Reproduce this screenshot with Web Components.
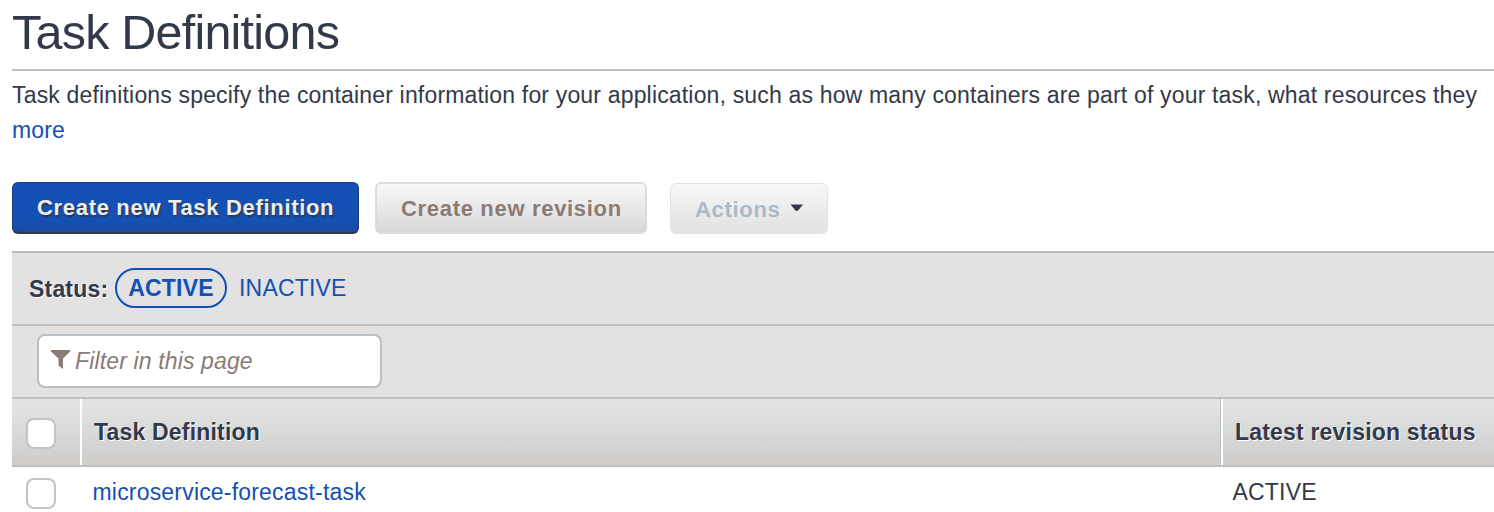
<!DOCTYPE html>
<html lang="en"><head><meta charset="utf-8"><title>Task Definitions</title>
<style>
html,body{margin:0;background:#fff;overflow:hidden}
body{width:1494px;height:512px;font-family:"Liberation Sans",Arial,sans-serif;font-size:23px;letter-spacing:.19px;color:#32394a}
</style></head><body>
<task-page></task-page>
<script>
const define=(name,css,html)=>{
  const t=document.createElement('template');
  t.innerHTML=`<style>*{box-sizing:border-box}:host{box-sizing:border-box}${css}</style>${html}`;
  customElements.define(name,class extends HTMLElement{
    constructor(){super();this.attachShadow({mode:'open'}).append(t.content.cloneNode(true));}
  });
};
define('page-intro',`:host{display:block;height:182px;padding-left:12px}
h1{margin:0;height:71px;border-bottom:2px solid #c0c1c3;font-size:48.5px;font-weight:400;line-height:64px;letter-spacing:-.78px;white-space:nowrap}
p{margin:0;padding-top:7px;line-height:35px;white-space:nowrap;letter-spacing:.17px}
a{color:#1450b4;display:block}`,
`<h1><slot name="title"></slot></h1><p><slot></slot><a><slot name="link"></slot></a></p>`);
define('push-button',`:host{display:flex;align-items:center;height:52px;border-radius:6px;font-size:22px;font-weight:700;letter-spacing:.68px;white-space:nowrap;width:var(--w);padding:1px 0 0 24px}
:host([kind=primary]){background:linear-gradient(#1450b4 75%,#184aa0);border:1px solid #1b3b7a;border-bottom:2px solid #32394a;color:#eceef0;text-shadow:1px 2px 1px #32394a}
:host([kind=normal]){background:linear-gradient(#f8f8f8,#e4e4e4 65%,#d6d8d7);border:2px solid #dadcdc;color:#8a7b75}
:host([kind=disabled]){background:linear-gradient(#f8f8f8,#e4e4e4 85%);border:1px solid #e2e2e2;color:#adb9c4;height:51px;margin-top:1px;padding-top:2px}
`,`<slot></slot>`);
define('caret-down',`:host{display:block;margin-left:10px;margin-top:-3px}svg{display:block}`,`<svg width="14" height="8"><path d="M.5 .500H13L8.500 6Q6.800 8 5 6Z" fill="#32394a"/></svg>`);
define('button-bar',`:host{display:flex;height:69px;padding-left:12px;align-items:flex-start}`,`<slot></slot>`);
define('status-filter',`:host{display:flex;align-items:center;height:75px;border-top:2px solid #b9bdc0;border-bottom:2px solid #bcc0c3;padding:0 0 1px 17px;background:#e2e2e2}
b{text-shadow:1px 1px #fff;margin-top:3px;width:86px}
.on{display:grid;place-items:center;width:112px;height:40px;border:2px solid #1450b4;border-radius:20px;color:#1450b4;font-weight:700}
.off{color:#1450b4;margin-left:12px;margin-top:1px}`,
`<b>Status:</b><span class="on"><slot name="on"></slot></span><span class="off"><slot name="off"></slot></span>`);
define('page-filter',`:host{display:flex;height:73px;background:#e2e2e2;border-bottom:2px solid #c0c1c3;padding:8px 0 0 25px}
div{display:flex;align-items:center;width:345px;height:54px;border:2px solid #b9c0c5;border-radius:8px;background:#fff;padding-left:12px;font-style:italic;color:#8a7b75;gap:5px;letter-spacing:.14px}
svg{margin-top:-3px}`,
`<div><svg width="19" height="19"><path d="M0 0H19V1.500L12 8.500V19L7.500 15.500V8.500L0 1.500Z" fill="#8a7b75"/></svg><span><slot></slot></span></div>`);
define('check-box',`:host{display:block;width:30px;height:31px;border:2px solid #c0c4c7;border-radius:8px;background:#fff}`,``);
define('table-head',`:host{display:grid;grid-template-columns:68px 1141px 1fr;height:68px;background:linear-gradient(#e4e4e4,#d8dad9 50%,#cfccc9);border-bottom:2px solid #b9c0c5;font-weight:700;text-shadow:1px 1px #fff}
div{display:flex;align-items:center;white-space:nowrap;padding-top:1px}
div+div{border-left:2px solid #fff;padding-left:12px}
.c{padding-left:14px;padding-top:3px}.l{box-shadow:-1px 0 #b9c0c5}`,
`<div class="c"><check-box></check-box></div><div><slot name="name"></slot></div><div class="l"><slot name="status"></slot></div>`);
define('table-row',`:host{display:grid;grid-template-columns:68px 1141px 1fr;height:45px;background:#fff}
div{white-space:nowrap;padding:11px 0 0 12.500px;line-height:28px}
.c{padding:11px 0 0 14px}a{color:#1450b4}.s{padding-left:11.500px}`,
`<div class="c"><check-box></check-box></div><div><a><slot name="name"></slot></a></div><div class="s"><slot name="status"></slot></div>`);
define('data-panel',`:host{display:block;margin-left:12px}`,`<slot></slot>`);
define('task-page',`:host{display:block;width:1494px;height:512px;overflow:hidden}`,`
<page-intro><span slot="title">Task Definitions</span><span>Task definitions specify the container information for your application, such as how many containers are part of your task, what resources they</span><span slot="link">more</span></page-intro>
<button-bar><push-button kind="primary" style="--w:347px"><span>Create new Task Definition</span></push-button><push-button kind="normal" style="--w:272px;margin-left:16px"><span>Create new revision</span></push-button><push-button kind="disabled" style="--w:158px;margin-left:23px"><span>Actions</span><caret-down></caret-down></push-button></button-bar>
<data-panel><status-filter><span slot="on">ACTIVE</span><span slot="off">INACTIVE</span></status-filter>
<page-filter><span>Filter in this page</span></page-filter>
<table-head><span slot="name">Task Definition</span><span slot="status">Latest revision status</span></table-head>
<table-row><span slot="name">microservice-forecast-task</span><span slot="status">ACTIVE</span></table-row></data-panel>`);
</script></body></html>
